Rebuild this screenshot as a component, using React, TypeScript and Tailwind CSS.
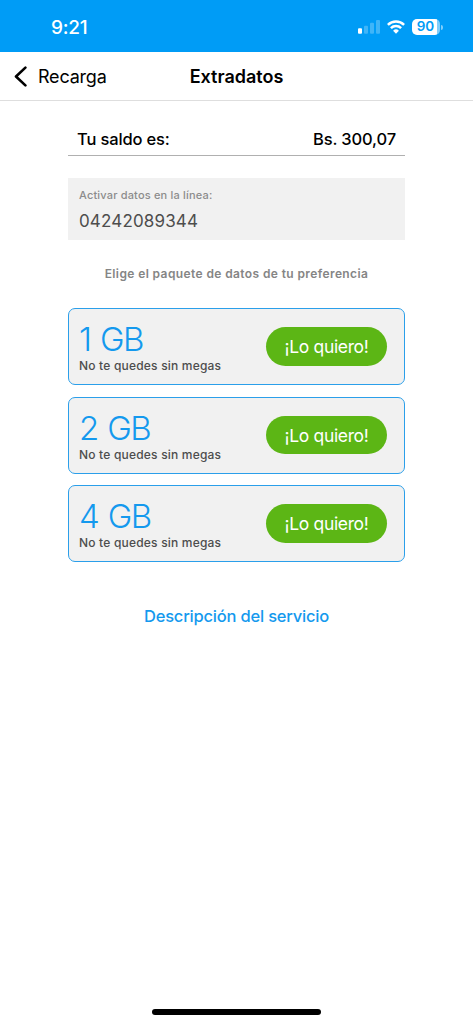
interface Paquete {
    id: number;
    nombre: string;
    detalle: string;
}

const paquetes: Paquete[] = [
    { id: 1, nombre: '1 GB', detalle: 'No te quedes sin megas' },
    { id: 2, nombre: '2 GB', detalle: 'No te quedes sin megas' },
    { id: 4, nombre: '4 GB', detalle: 'No te quedes sin megas' },
];

function StatusBar() {
    return (
        <div className="flex h-[52px] items-center justify-between bg-[#009cf6] pt-[3px] pr-[30px] pl-[51px] text-white">
            <span className="text-[19px] leading-none font-medium tracking-[-0.2px]">9:21</span>
            <div className="flex items-center">
                {/* Señal */}
                <svg width="22" height="15" viewBox="0 0 22 15" fill="currentColor">
                    <rect x="0" y="8.2" width="4" height="5.5" rx="1" />
                    <rect x="6" y="5.7" width="4" height="8" rx="1" opacity="0.25" />
                    <rect x="12" y="2.7" width="4" height="11" rx="1" opacity="0.25" />
                    <rect x="18" y="0" width="4" height="13.7" rx="1" opacity="0.25" />
                </svg>
                {/* Wifi */}
                <svg className="mb-[2px] ml-[7px]" width="18" height="14" viewBox="0 0 18 14" fill="none" stroke="currentColor" strokeWidth="2.5">
                    <path d="M0.9 4.9a11.6 11.6 0 0 1 16.2 0" />
                    <path d="M3.9 8.2a7.3 7.3 0 0 1 10.2 0" />
                    <path d="M9 13.7l-2.9-2.9a4.1 4.1 0 0 1 5.8 0z" fill="currentColor" stroke="none" />
                </svg>
                {/* Batería */}
                <div className="mb-px ml-[7px] flex h-4 w-7 items-center justify-center rounded-[5px] bg-linear-to-r from-white from-90% to-white/50 to-90% pr-px text-[13.5px] leading-none font-semibold text-[#009cf6]">
                    90
                </div>
                <div className="ml-px h-[5px] w-[2px] rounded-r-full bg-white/50"></div>
            </div>
        </div>
    );
}

function PaqueteCard({ paquete }: { paquete: Paquete }) {
    return (
        <div className="flex h-[77px] items-center justify-between rounded-[7px] border border-[#2b9fea] bg-[#f1f1f1] pr-[17px] pl-[10px]">
            <div>
                <h2 className="pt-px text-[33px] leading-[38px] font-[260] tracking-[-1.6px] text-[#1499ee] [word-spacing:2px]">{paquete.nombre}</h2>
                <p className="text-[12px] leading-4 font-medium tracking-[0.2px] text-[#4d4d4d]">{paquete.detalle}</p>
            </div>
            <button className="h-[38.5px] w-[121px] rounded-full bg-[#5cb615] pt-[2px] text-[17.5px] tracking-[-0.35px] text-white">¡Lo quiero!</button>
        </div>
    );
}

export default function App() {
    return (
        <div className="flex h-screen flex-col bg-white font-['Inter',sans-serif] text-black">
            <StatusBar />

            {/* Encabezado */}
            <header className="grid h-[49px] grid-cols-[1fr_auto_1fr] items-center border-b border-[#dedede] px-[14px]">
                <button className="flex items-center gap-[11px] text-[18px] tracking-[-0.2px]">
                    <svg width="13" height="21" viewBox="0 0 13 21" fill="none" stroke="currentColor" strokeWidth="2.6" strokeLinecap="round" strokeLinejoin="round">
                        <path d="M11.4 1.6L2 10.5l9.4 8.9" />
                    </svg>
                    Recarga
                </button>
                <h1 className="text-[18px] font-semibold">Extradatos</h1>
            </header>

            <main className="flex flex-1 flex-col px-[68px]">
                <div className="mt-[22px] flex h-[33px] items-center justify-between border-b border-[#b0b0b0] pt-px px-[9px] text-[16.5px] font-medium tracking-[-0.15px]">
                    <span>Tu saldo es:</span>
                    <span>Bs. 300,07</span>
                </div>

                <div className="mt-[22px] h-[62px] bg-[#f1f1f1] px-[11px] pt-[9px]">
                    <p className="text-[11px] leading-4 font-medium tracking-[0.18px] text-[#8c8c8c]">Activar datos en la línea:</p>
                    <p className="mt-[7px] text-[17px] leading-[22px] tracking-[0.15px] text-[#4d4d4d]">04242089344</p>
                </div>

                <p className="mt-[25px] text-center text-[12px] leading-[18px] font-semibold tracking-[0.39px] text-[#858585]">
                    Elige el paquete de datos de tu preferencia
                </p>

                <div className="mt-[25px] flex flex-col gap-[11.5px]">
                    {paquetes.map((paquete) => (
                        <PaqueteCard key={paquete.id} paquete={paquete} />
                    ))}
                </div>

                <a href="#" className="mt-[42px] text-center text-[16.5px] leading-6 font-medium tracking-[-0.2px] text-[#1499ee]">
                    Descripción del servicio
                </a>
            </main>

            <div className="mx-auto mb-[9px] h-[6px] w-[169px] rounded-full bg-black"></div>
        </div>
    );
}
